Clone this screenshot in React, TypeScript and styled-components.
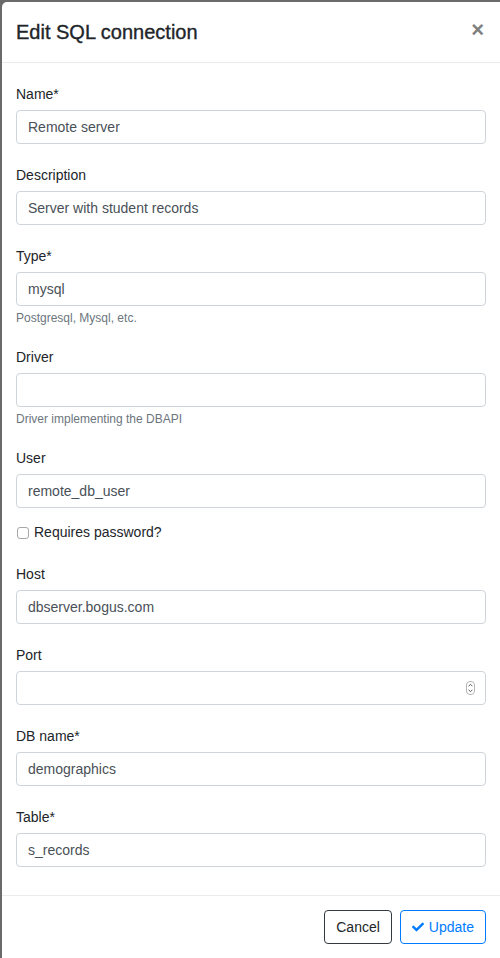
import { FaCheck } from 'react-icons/fa';
import styled, { createGlobalStyle } from 'styled-components';

const GlobalStyle = createGlobalStyle`
  html, body {
    margin: 0;
    padding: 0;
    background-color: #6a6a6a;
  }
  body {
    font-family: 'Liberation Sans', Arial, sans-serif;
    font-size: 14px;
    color: #212529;
  }
  * {
    box-sizing: border-box;
  }
`;

const Backdrop = styled.div`
  padding: 2px 0 0 2px;
  min-height: 958px;
`;

const Modal = styled.div`
  background-color: #fff;
  border-radius: 5px 0 0 0;
  min-height: 956px;
  display: flex;
  flex-direction: column;
`;

const ModalHeader = styled.div`
  display: flex;
  align-items: flex-start;
  justify-content: space-between;
  padding: 15px 14px 15px 14px;
  border-bottom: 1px solid #e9ecef;
`;

const ModalTitle = styled.h5`
  margin: 0;
  font-size: 20px;
  line-height: 30px;
  font-weight: 500;
  color: #212529;
  -webkit-text-stroke: 0.35px #212529;
`;

const CloseButton = styled.button`
  border: none;
  background: transparent;
  padding: 0;
  margin: 2px 2px 0 0;
  font-family: 'Liberation Sans', Arial, sans-serif;
  font-size: 22px;
  font-weight: 700;
  line-height: 22px;
  color: #000;
  opacity: 0.5;
  cursor: pointer;
`;

const ModalBody = styled.form`
  flex: 1;
  padding: 21px 14px 7px 14px;
`;

const FormGroup = styled.div<{ $tight?: boolean }>`
  margin-bottom: ${(p) => (p.$tight ? '14px' : '21px')};
`;

const Label = styled.label`
  display: block;
  line-height: 21px;
  margin-bottom: 5px;
  font-size: 14px;
  color: #212529;
`;

const Input = styled.input`
  display: block;
  width: 100%;
  height: 34px;
  padding: 6px 11px;
  font-family: 'Liberation Sans', Arial, sans-serif;
  font-size: 14px;
  line-height: 21px;
  color: #495057;
  background-color: #fff;
  border: 1px solid #ced4da;
  border-radius: 4px;
  outline: none;
`;

const NumberField = styled.div`
  display: flex;
  align-items: center;
  height: 34px;
  padding: 0 10px 0 11px;
  border: 1px solid #ced4da;
  border-radius: 4px;
  background-color: #fff;
`;

const BareInput = styled.input`
  flex: 1;
  min-width: 0;
  border: none;
  outline: none;
  padding: 0;
  font-family: 'Liberation Sans', Arial, sans-serif;
  font-size: 14px;
  color: #495057;
  background: transparent;
`;

const HelpText = styled.small`
  display: block;
  margin-top: 4px;
  font-size: 12px;
  line-height: 16px;
  color: #6c757d;
`;

const CheckRow = styled.div`
  display: flex;
  align-items: center;
  gap: 5px;
  line-height: 21px;
  margin: 0 0 21px 1px;
`;

const Checkbox = styled.input`
  appearance: none;
  width: 12px;
  height: 12px;
  margin: 0;
  border: 1px solid #a8a8a8;
  border-radius: 3px;
  background-color: #fff;
`;

const CheckLabel = styled.label`
  font-size: 14px;
  color: #212529;
`;

const ModalFooter = styled.div`
  display: flex;
  justify-content: flex-end;
  align-items: center;
  gap: 8px;
  padding: 14px 14px 14px 14px;
  border-top: 1px solid #e9ecef;
`;

const Button = styled.button<{ $variant: 'dark' | 'primary' }>`
  display: inline-flex;
  align-items: center;
  gap: 5px;
  height: 34px;
  padding: 0 11px;
  font-family: 'Liberation Sans', Arial, sans-serif;
  font-size: 14px;
  background-color: #fff;
  border-radius: 4px;
  cursor: pointer;
  border: 1px solid ${(p) => (p.$variant === 'dark' ? '#343a40' : '#007bff')};
  color: ${(p) => (p.$variant === 'dark' ? '#212529' : '#007bff')};

  svg {
    font-size: 12px;
  }
`;

const Spinner = () => (
  <svg width="9" height="14" viewBox="0 0 9 14">
    <rect x="0.5" y="0.5" width="8" height="13" rx="3.5" fill="#fff" stroke="#b5b5b5" />
    <path d="M2.6 5.2 L4.5 3.3 L6.4 5.2" fill="none" stroke="#555" strokeWidth="1" />
    <path d="M2.6 8.8 L4.5 10.7 L6.4 8.8" fill="none" stroke="#555" strokeWidth="1" />
  </svg>
);

const fields = [
  { label: 'Name*', value: 'Remote server' },
  { label: 'Description', value: 'Server with student records' },
  { label: 'Type*', value: 'mysql', help: 'Postgresql, Mysql, etc.' },
  { label: 'Driver', value: '', help: 'Driver implementing the DBAPI' },
];

const lowerFields = [{ label: 'Host', value: 'dbserver.bogus.com' }];

const tailFields = [
  { label: 'DB name*', value: 'demographics' },
  { label: 'Table*', value: 's_records' },
];

const App = () => {
  return (
    <>
      <GlobalStyle />
      <Backdrop>
        <Modal>
          <ModalHeader>
            <ModalTitle>Edit SQL connection</ModalTitle>
            <CloseButton type="button" aria-label="Close">
              ×
            </CloseButton>
          </ModalHeader>

          <ModalBody onSubmit={(e) => e.preventDefault()}>
            {fields.map((f, index) => (
              <FormGroup key={index}>
                <Label>{f.label}</Label>
                <Input type="text" defaultValue={f.value} />
                {f.help && <HelpText>{f.help}</HelpText>}
              </FormGroup>
            ))}

            <FormGroup $tight>
              <Label>User</Label>
              <Input type="text" defaultValue="remote_db_user" />
            </FormGroup>

            <CheckRow>
              <Checkbox type="checkbox" id="requires-password" />
              <CheckLabel htmlFor="requires-password">Requires password?</CheckLabel>
            </CheckRow>

            {lowerFields.map((f, index) => (
              <FormGroup key={index}>
                <Label>{f.label}</Label>
                <Input type="text" defaultValue={f.value} />
              </FormGroup>
            ))}

            <FormGroup>
              <Label>Port</Label>
              <NumberField>
                <BareInput type="text" defaultValue="" />
                <Spinner />
              </NumberField>
            </FormGroup>

            {tailFields.map((f, index) => (
              <FormGroup key={index}>
                <Label>{f.label}</Label>
                <Input type="text" defaultValue={f.value} />
              </FormGroup>
            ))}
          </ModalBody>

          <ModalFooter>
            <Button type="button" $variant="dark">
              Cancel
            </Button>
            <Button type="button" $variant="primary">
              <FaCheck /> Update
            </Button>
          </ModalFooter>
        </Modal>
      </Backdrop>
    </>
  );
};

export default App;
